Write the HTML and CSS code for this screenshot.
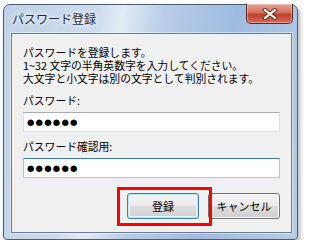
FILE: index.html
```html
<!DOCTYPE html>
<html lang="ja">
<head>
    <meta charset="UTF-8">
    <title>パスワード登録</title>
    <link rel="stylesheet" href="styles.css">
</head>
<body>

<div class="window">
    <div class="titlebar">
        <span class="title">パスワード登録</span>
        <span class="close">
            <svg width="16" height="12" viewBox="0 0 16 12">
                <path d="M3 2 L13 10 M13 2 L3 10" stroke="#5a2a22" stroke-width="4" stroke-linecap="square"/>
                <path d="M3 2 L13 10 M13 2 L3 10" stroke="#fff" stroke-width="2.2" stroke-linecap="square"/>
            </svg>
        </span>
    </div>
    <div class="panel">
        <div class="intro">
            <div class="line">パスワードを登録します。</div>
            <div class="line">1~32 文字の半角英数字を入力してください。</div>
            <div class="line">大文字と小文字は別の文字として判別されます。</div>
        </div>
        <div class="label">パスワード:</div>
        <div class="field"><span class="dots">●●●●●●</span></div>
        <div class="label">パスワード確認用:</div>
        <div class="field focus"><span class="dots">●●●●●●</span></div>
        <div class="buttons">
            <span class="marked">
                <button class="btn default">登録</button>
                <span class="mark"></span>
            </span>
            <button class="btn">キャンセル</button>
        </div>
    </div>
</div>

</body>
</html>
```

FILE: styles.css
```css
body { margin: 0; background: #fff; font-family: "Noto Sans CJK JP", sans-serif; color: #000; }
.window { margin: 4px 0 0 3px; width: 295px; height: 236px; box-sizing: border-box; display: flex; flex-direction: column;
    border: 1px solid #4a5d78; border-radius: 7px 7px 4px 4px; box-shadow: 2px 3px 5px rgba(0,0,0,0.3);
    background: linear-gradient(100deg, #c2d3e8 0%, #ccdbec 28%, #e3ebf5 36%, #b9cee8 48%, #9fbbe0 70%, #b7cce7 100%); }
.titlebar { height: 28px; display: flex; justify-content: space-between; align-items: flex-start; padding: 0 4px 0 8px; }
.title { font-size: 12px; line-height: 28px; color: #1b2a3c; text-shadow: 0 0 6px #fff, 0 0 3px #fff; }
.close { width: 47px; height: 20px; margin-top: -1px; box-sizing: border-box; display: flex; align-items: center; justify-content: center;
    border: 1px solid #5a2a24; border-top: none; border-radius: 0 0 5px 5px;
    background: linear-gradient(#e8a293 0%, #d3715f 45%, #c0412c 55%, #d7695a 100%); box-shadow: inset 0 0 0 1px rgba(255,255,255,0.35); }
.panel { flex: 1; margin: 0 5px 6px 7px; background: #f0f0f0; border: 1px solid #677c98; padding: 12px 11px 0 11px;
    box-shadow: 0 0 0 1px rgba(255,255,255,0.45); }
.intro { font-size: 10.8px; }
.line { height: 13px; line-height: 13px; }
.label { margin-top: 9px; font-size: 10.8px; line-height: 13px; }
.label + .field { margin-top: 5px; }
.field + .label { margin-top: 8px; }
.field { height: 20px; box-sizing: border-box; background: #fff; border: 1px solid #dbdfe6; border-top-color: #abadb3;
    display: flex; align-items: center; padding-left: 3px; }
.field.focus { border-color: #a4c9e3; border-top-color: #3d7bad; }
.dots { font-family: "DejaVu Sans", sans-serif; font-size: 8.5px; letter-spacing: 1.2px; line-height: 1; }
.buttons { display: flex; justify-content: flex-end; gap: 9px; margin-top: 15px; }
.marked { position: relative; display: flex; }
.btn { width: 72px; height: 26px; padding: 0; font-family: "Noto Sans CJK JP", sans-serif; font-size: 11px; color: #000;
    border: 1px solid #707070; border-radius: 3px;
    background: linear-gradient(#f2f2f2 0%, #ebebeb 50%, #dddddd 51%, #cfcfcf 100%); box-shadow: inset 0 0 0 1px #fcfcfc; }
.btn.default { border-color: #3c7fb1; box-shadow: inset 0 0 0 1px #bde8fb, inset 0 0 0 2px #e6f4fb; }
.mark { position: absolute; left: -10px; top: -6px; width: 95px; height: 39px; box-sizing: border-box; border: 3px solid #f00; }
```
